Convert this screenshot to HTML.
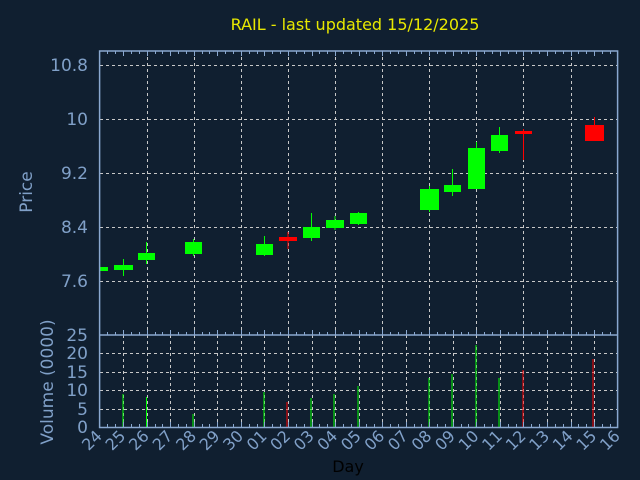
<!DOCTYPE html>
<html><head><meta charset="utf-8"><style>
html,body{margin:0;padding:0;background:#0f1f30;}
svg{display:block;font-family:"DejaVu Sans","Liberation Sans",sans-serif;}
</style></head><body>
<svg id="s" width="640" height="480" viewBox="0 0 640 480" xmlns="http://www.w3.org/2000/svg">
<rect width="640" height="480" fill="#101f30"/>
<text x="355" y="30" fill="#e8e800" font-size="16" text-anchor="middle">RAIL - last updated 15/12/2025</text>
<g id="grid" stroke="#c8c8c8" stroke-width="1" stroke-dasharray="3,3" fill="none">
<line x1="100" y1="65.5" x2="617" y2="65.5"/>
<line x1="100" y1="119.5" x2="617" y2="119.5"/>
<line x1="100" y1="173.5" x2="617" y2="173.5"/>
<line x1="100" y1="227.5" x2="617" y2="227.5"/>
<line x1="100" y1="281.5" x2="617" y2="281.5"/>
<line x1="100" y1="353.5" x2="617" y2="353.5"/>
<line x1="100" y1="372.5" x2="617" y2="372.5"/>
<line x1="100" y1="390.5" x2="617" y2="390.5"/>
<line x1="100" y1="409.5" x2="617" y2="409.5"/>
</g>
<g id="cand"></g>
<g fill="none" stroke="#8aa8d0" stroke-width="1.5">
<rect x="99.6" y="51" width="518" height="376.5"/>
<line x1="99.6" y1="335" x2="617.6" y2="335"/>
</g>
<g id="ticks" stroke="#8aa8d0" stroke-width="1"></g>
<g fill="#80a0c8" font-size="17" text-anchor="end">
<text x="88" y="71">10.8</text>
<text x="88" y="125">10</text>
<text x="88" y="179">9.2</text>
<text x="88" y="233">8.4</text>
<text x="88" y="287">7.6</text>
<text x="88" y="341">25</text>
<text x="88" y="359">20</text>
<text x="88" y="378">15</text>
<text x="88" y="396">10</text>
<text x="88" y="415">5</text>
<text x="88" y="433">0</text>
<text transform="translate(32,192) rotate(-90)" text-anchor="middle">Price</text>
<text transform="translate(53,382) rotate(-90)" text-anchor="middle">Volume (0000)</text>
</g>
<g id="xl" fill="#80a0c8" font-size="16" text-anchor="end">
<text transform="translate(103,437) rotate(-45)">24</text>
<text transform="translate(126.5,437) rotate(-45)">25</text>
<text transform="translate(150,437) rotate(-45)">26</text>
<text transform="translate(173.6,437) rotate(-45)">27</text>
<text transform="translate(197.2,437) rotate(-45)">28</text>
<text transform="translate(220.7,437) rotate(-45)">29</text>
<text transform="translate(244.2,437) rotate(-45)">30</text>
<text transform="translate(267.8,437) rotate(-45)">01</text>
<text transform="translate(291.3,437) rotate(-45)">02</text>
<text transform="translate(314.9,437) rotate(-45)">03</text>
<text transform="translate(338.4,437) rotate(-45)">04</text>
<text transform="translate(362,437) rotate(-45)">05</text>
<text transform="translate(385.5,437) rotate(-45)">06</text>
<text transform="translate(409,437) rotate(-45)">07</text>
<text transform="translate(432.6,437) rotate(-45)">08</text>
<text transform="translate(456.1,437) rotate(-45)">09</text>
<text transform="translate(479.7,437) rotate(-45)">10</text>
<text transform="translate(503.2,437) rotate(-45)">11</text>
<text transform="translate(526.8,437) rotate(-45)">12</text>
<text transform="translate(550.3,437) rotate(-45)">13</text>
<text transform="translate(573.8,437) rotate(-45)">14</text>
<text transform="translate(597.4,437) rotate(-45)">15</text>
<text transform="translate(621,437) rotate(-45)">16</text>
</g>
<text x="348" y="472" fill="#000" font-size="16" text-anchor="middle">Day</text>
</svg>
<script>
(function(){
var NS="http://www.w3.org/2000/svg";
function el(p,t,a){var e=document.createElementNS(NS,t);for(var k in a)e.setAttribute(k,a[k]);document.getElementById(p).appendChild(e);return e;}
var x0=99.6,dx=23.545;
function X(i){return x0+dx*i;}
// vertical grid
for(var i=1;i<22;i++){
 var x=Math.round(X(i))+0.5;
 el("grid","line",{x1:x,y1:335,x2:x,y2:427});
 if(i%2==0) el("grid","line",{x1:x,y1:51,x2:x,y2:335});
}
// ticks
for(var j=1;j<66;j++){
 var x=Math.round(x0+j*dx/3)+0.5;var L=(j%3==0)?5:3;
 el("ticks","line",{x1:x,y1:51,x2:x,y2:51+L});
 el("ticks","line",{x1:x,y1:335,x2:x,y2:335-L});
 el("ticks","line",{x1:x,y1:427,x2:x,y2:427-L});
}
var G="#00ff00",R="#ff0000";
var c=[
 [99.6,108,267,271,267,271,G],
 [114,133,265,270,259,276,G],
 [138,155,253,260,242,264,G],
 [185,202,242,254,239,256,G],
 [256,273,244,255,236,256,G],
 [279,297,237,241,232,249,R],
 [303,320,227,238,213,241,G],
 [326,344,220,228,216,230,G],
 [350,367,213,224,212,225,G],
 [420,439,189,210,186,212,G],
 [444,461,185,192,169,196,G],
 [468,485,148,189,142,189,G],
 [491,508,135,151,127,153,G],
 [515,532,131,134,129,160,R],
 [585,604,125,141,117,141,R]];
c.forEach(function(a){
 var mx=(a[0]<100)?103.5:(a[0]+a[1])/2;
 el("cand","line",{x1:mx,y1:a[4],x2:mx,y2:a[5],stroke:a[6],"stroke-width":1});
 el("cand","rect",{x:a[0],y:a[2],width:a[1]-a[0],height:a[3]-a[2],fill:a[6]});
});
var v=[[123,394,G],[146.5,397,G],[193,414,G],[264,392,G],[287,402,R],[311,398,G],[334,394,G],[358,386,G],[429,378,G],[452,374,G],[476,345,G],[499,378,G],[523,370,R],[593,359,R]];
v.forEach(function(a){el("cand","line",{x1:a[0],y1:a[1],x2:a[0],y2:427,stroke:a[2],"stroke-width":1});});
})();
</script>
</body></html>
